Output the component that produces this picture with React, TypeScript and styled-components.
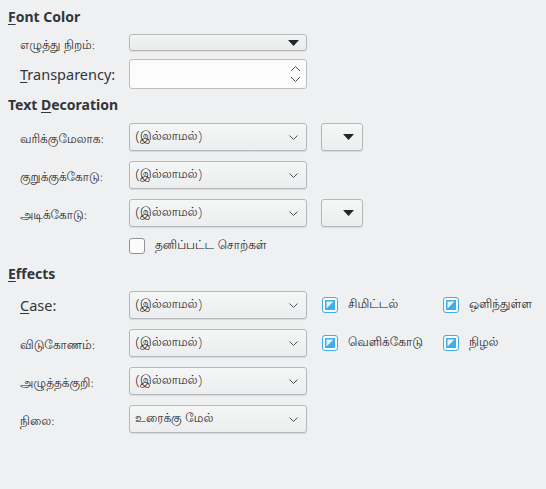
import styled, { createGlobalStyle } from 'styled-components';

const GlobalStyle = createGlobalStyle`
  html, body {
    margin: 0;
    padding: 0;
    background: #eff0f1;
  }
  body {
    font-family: "Noto Sans", "Open Sans", "DejaVu Sans", sans-serif;
    font-size: 14.5px;
    color: #31363b;
  }
`;

const Page = styled.div`
  width: 546px;
  height: 489px;
  box-sizing: border-box;
  padding: 7px 0 0 8px;
  display: flex;
  flex-direction: column;
  background: #eff0f1;
`;

const Heading = styled.div<{ $top: number }>`
  margin-top: ${p => p.$top}px;
  height: 20px;
  line-height: 20px;
  font-weight: bold;
  font-size: 14px;
  color: #31363b;
`;

const Mn = styled.span`
  text-decoration: underline;
  text-underline-offset: 2px;
`;

// Tamil text: the reference font is narrower than the fallback, so it is set smaller
const Ta = styled.span`
  font-family: "Lohit Tamil", "TSCu_Paranar", "Noto Serif Tamil", "Noto Sans Tamil", "Noto Sans", sans-serif;
  font-size: 12px;
  color: #1e2124;
`;

const Row = styled.div<{ $top: number; $h?: number }>`
  margin-top: ${p => p.$top}px;
  height: ${p => p.$h ?? 28}px;
  display: flex;
  align-items: center;
  padding-left: 12px;
`;

const Label = styled.div`
  width: 109px;
  flex-shrink: 0;
  white-space: nowrap;
`;

const ColorButton = styled.div`
  width: 178px;
  height: 17px;
  box-sizing: border-box;
  border: 1px solid #b6b8ba;
  border-radius: 3px;
  background: linear-gradient(#f3f4f4, #e9eaeb);
  box-shadow: 0 1px 1px rgba(0, 0, 0, 0.08);
  display: flex;
  align-items: center;
  justify-content: flex-end;
  padding-right: 7px;
`;

const SpinBox = styled.div`
  width: 178px;
  height: 30px;
  box-sizing: border-box;
  border: 1px solid #bcbebf;
  border-radius: 3px;
  background: #fcfcfc;
  display: flex;
  align-items: center;
  justify-content: flex-end;
  padding-right: 5px;
`;

const Combo = styled.div`
  width: 178px;
  height: 28px;
  box-sizing: border-box;
  border: 1px solid #b6b8ba;
  border-radius: 3px;
  background: linear-gradient(#f5f6f6, #ecedee);
  box-shadow: 0 1px 1px rgba(0, 0, 0, 0.1);
  display: flex;
  align-items: center;
  justify-content: space-between;
  padding: 0 8px 0 5px;
  white-space: nowrap;
`;

const SmallButton = styled(Combo)`
  width: 42px;
  margin-left: 14px;
  justify-content: flex-end;
  padding-right: 8px;
`;

const Check = styled.div<{ $on?: boolean }>`
  width: 16px;
  height: 16px;
  box-sizing: border-box;
  border-radius: 3px;
  border: 1px solid ${p => (p.$on ? '#3daee9' : '#8f9294')};
  background: #fcfcfc;
  display: flex;
  align-items: center;
  justify-content: center;
  flex-shrink: 0;
`;

const CheckItem = styled.div<{ $w?: number; $ml?: number }>`
  display: flex;
  align-items: center;
  gap: 10px;
  margin-left: ${p => p.$ml ?? 0}px;
  width: ${p => (p.$w ? `${p.$w}px` : 'auto')};
  white-space: nowrap;
`;

const Triangle = () => (
  <svg width="11" height="6" viewBox="0 0 11 6">
    <path d="M0 0 H11 L5.5 6 Z" fill="#232629" />
  </svg>
);

const Chevron = () => (
  <svg width="9" height="5" viewBox="0 0 9 5">
    <path d="M0.5 0.5 L4.5 4.5 L8.5 0.5" fill="none" stroke="#4d5154" strokeWidth="1" />
  </svg>
);

const SpinArrows = () => (
  <svg width="11" height="18" viewBox="0 0 11 18">
    <path d="M1 6 L5.5 1.5 L10 6" fill="none" stroke="#4d5154" strokeWidth="1" />
    <path d="M1 12 L5.5 16.5 L10 12" fill="none" stroke="#4d5154" strokeWidth="1" />
  </svg>
);

const PartialMark = () => (
  <svg width="10" height="10" viewBox="0 0 10 10">
    <rect x="0" y="0" width="10" height="10" fill="#3daee9" />
    <path d="M1.5 1.5 H8.5 L1.5 8.5 Z" fill="#e6f4fb" />
  </svg>
);

const ComboBox = ({ text }: { text: string }) => (
  <Combo>
    <Ta>{text}</Ta>
    <Chevron />
  </Combo>
);

const CheckOn = ({ text, w, ml }: { text: string; w?: number; ml?: number }) => (
  <CheckItem $w={w} $ml={ml}>
    <Check $on>
      <PartialMark />
    </Check>
    <Ta>{text}</Ta>
  </CheckItem>
);

const none = '(இல்லாமல்)';

export default function App() {
  return (
    <>
      <GlobalStyle />
      <Page>
        <Heading $top={0}>
          <Mn>F</Mn>ont Color
        </Heading>
        <Row $top={7} $h={17}>
          <Label>
            <Ta>எழுத்து நிறம்:</Ta>
          </Label>
          <ColorButton>
            <Triangle />
          </ColorButton>
        </Row>
        <Row $top={8} $h={30}>
          <Label>
            <Mn>T</Mn>ransparency:
          </Label>
          <SpinBox>
            <SpinArrows />
          </SpinBox>
        </Row>

        <Heading $top={6}>
          Text <Mn>D</Mn>ecoration
        </Heading>
        <Row $top={8}>
          <Label>
            <Ta>வரிக்குமேலாக:</Ta>
          </Label>
          <ComboBox text={none} />
          <SmallButton>
            <Triangle />
          </SmallButton>
        </Row>
        <Row $top={10}>
          <Label>
            <Ta>குறுக்குக்கோடு:</Ta>
          </Label>
          <ComboBox text={none} />
        </Row>
        <Row $top={10}>
          <Label>
            <Ta>அடிக்கோடு:</Ta>
          </Label>
          <ComboBox text={none} />
          <SmallButton>
            <Triangle />
          </SmallButton>
        </Row>
        <Row $top={11} $h={16}>
          <Label />
          <CheckItem>
            <Check />
            <Ta>தனிப்பட்ட சொற்கள்</Ta>
          </CheckItem>
        </Row>

        <Heading $top={10}>
          <Mn>E</Mn>ffects
        </Heading>
        <Row $top={7}>
          <Label>
            <Mn>C</Mn>ase:
          </Label>
          <ComboBox text={none} />
          <CheckOn text="சிமிட்டல்" ml={15} w={121} />
          <CheckOn text="ஒளிந்துள்ள" />
        </Row>
        <Row $top={10}>
          <Label>
            <Ta>விடுகோணம்:</Ta>
          </Label>
          <ComboBox text={none} />
          <CheckOn text="வெளிக்கோடு" ml={15} w={121} />
          <CheckOn text="நிழல்" />
        </Row>
        <Row $top={10}>
          <Label>
            <Ta>அழுத்தக்குறி:</Ta>
          </Label>
          <ComboBox text={none} />
        </Row>
        <Row $top={10}>
          <Label>
            <Ta>நிலை:</Ta>
          </Label>
          <ComboBox text="உரைக்கு மேல்" />
        </Row>
      </Page>
    </>
  );
}
